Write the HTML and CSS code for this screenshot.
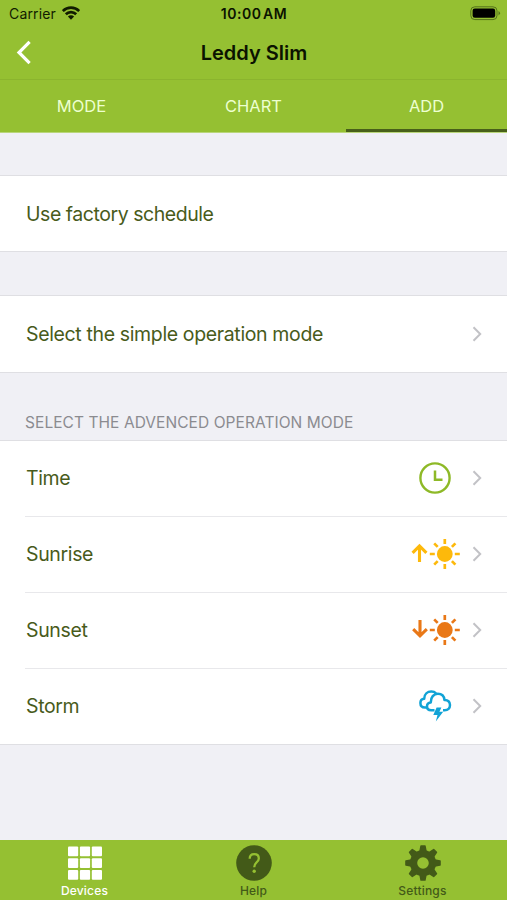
FILE: index.html
```html
<!DOCTYPE html>
<html lang="en">
<head>
<meta charset="utf-8">
<title>Leddy Slim</title>
<link rel="stylesheet" href="styles.css">
</head>
<body>
<svg class="defs" width="0" height="0" aria-hidden="true">
  <symbol id="chevron" viewBox="0 0 10 16"><path d="M1.500 1.300 8.200 8l-6.700 6.700" fill="none" stroke="currentColor" stroke-width="2"/></symbol>
  <symbol id="sun" viewBox="0 0 32 32">
    <circle cx="16" cy="16" r="7.900" fill="currentColor"/>
    <path d="M16 1v5M16 26v5M1 16h5M26 16h5M5.400 5.400 8.900 8.900M23.100 23.100l3.500 3.500M5.400 26.600l3.500-3.500M23.100 8.900l3.500-3.500" stroke="currentColor" stroke-width="2.700"/>
  </symbol>
</svg>
<div class="app">
  <header class="status">
    <div class="carrier"><span>Carrier</span>
      <svg width="18" height="14" viewBox="0 0 18 14"><g fill="none" stroke="#111c00" stroke-width="2.700"><path d="M.8 5a11.600 11.600 0 0 1 16.400 0"/><path d="M3.800 8.200a7.400 7.400 0 0 1 10.400 0"/></g><path d="M5.900 10.600a4.400 4.400 0 0 1 6.200 0L9 13.800z" fill="#111c00"/></svg>
    </div>
    <div class="clock">10:00&#8202;AM</div>
    <svg class="battery" width="31" height="15" viewBox="0 0 31 15"><rect x=".8" y=".8" width="26.200" height="12.800" rx="4" fill="none" stroke="#54721a" stroke-width="1"/><rect x="2.600" y="2.600" width="22.600" height="9.200" rx="2.200" fill="#000"/><path d="M28.500 5v4.400q3-2.200 0-4.400" fill="#54721a"/></svg>
  </header>
  <div class="nav">
    <svg class="back" width="16" height="26" viewBox="0 0 16 26"><path d="M13.600 1.900 3 12.500l10.600 10.600" fill="none" stroke="#fff" stroke-width="3.200"/></svg>
    <h1>Leddy Slim</h1>
  </div>
  <nav class="tabs"><span class="tab">MODE</span><span class="tab chart">CHART</span><span class="tab active">ADD</span></nav>
  <main>
    <section class="group"><div class="row"><span class="factory">Use factory schedule</span></div></section>
    <section class="group select"><div class="row"><span class="simple">Select the simple operation mode</span><svg class="chev"><use href="#chevron"/></svg></div></section>
    <h2><span>SELECT THE ADVENCED OPERATION MODE</span></h2>
    <section class="group modes">
      <div class="row"><span>Time</span>
        <svg class="icon" width="50" height="34" viewBox="0 0 50 34"><g fill="none" stroke="#8eb927"><circle cx="25" cy="17" r="14.600" stroke-width="2.400"/><path d="M25 9.500v9.200h7.500" stroke-width="2.500"/></g></svg>
        <svg class="chev"><use href="#chevron"/></svg></div>
      <div class="row"><span>Sunrise</span>
        <svg class="icon sunrise" width="50" height="34" viewBox="0 0 50 34"><path d="M9.500 25V9.500M2.600 15.800l6.900-6.900 6.900 6.900" fill="none" stroke="currentColor" stroke-width="3.100"/><use href="#sun" x="18.800" y="1" width="32" height="32"/></svg>
        <svg class="chev"><use href="#chevron"/></svg></div>
      <div class="row"><span>Sunset</span>
        <svg class="icon sunset" width="50" height="34" viewBox="0 0 50 34"><path d="M10 7v16M3.200 16.200l6.800 6.600 6.800-6.600" fill="none" stroke="currentColor" stroke-width="3.100"/><use href="#sun" x="18.800" y="1" width="32" height="32"/></svg>
        <svg class="chev"><use href="#chevron"/></svg></div>
      <div class="row"><span>Storm</span>
        <svg class="icon" width="50" height="34" viewBox="0 0 50 34"><g fill="none" stroke="#11a3d6" stroke-width="2.500" stroke-linejoin="round"><path d="M16.800 18.600H15c-3 0-4.600-2-4.600-4.500 0-2.700 1.800-4.200 3.800-4.300C14.300 5 17.500 2.600 21.300 2.600c2.200 0 3.600.6 4.800 1.800"/><path d="M24.500 21.300h-3.300c-2.800 0-4.200-1.800-4.200-4 0-2.400 1.700-3.800 3.800-3.900-.2-5.200 3-8.600 7-8.600 3.900 0 6.300 2.500 6.700 6.200 3.400-.2 5.500 1.900 5.500 5 0 3.200-2.100 5.300-5.300 5.300H33"/></g><path d="M26.600 18.400h4.800l-2 4.400h3.800l-7.400 9.600 1.700-6.400h-4.200z" fill="#11a3d6"/></svg>
        <svg class="chev"><use href="#chevron"/></svg></div>
    </section>
  </main>
  <footer class="bottom">
    <div class="item on"><svg width="36" height="36" viewBox="0 0 36 36" fill="currentColor"><rect x="1" y="1.500" width="10.200" height="9.800" rx="1"/><rect x="12.900" y="1.500" width="10.200" height="9.800" rx="1"/><rect x="24.800" y="1.500" width="10.200" height="9.800" rx="1"/><rect x="1" y="13.200" width="10.200" height="9.800" rx="1"/><rect x="12.900" y="13.200" width="10.200" height="9.800" rx="1"/><rect x="24.800" y="13.200" width="10.200" height="9.800" rx="1"/><rect x="1" y="24.900" width="10.200" height="9.800" rx="1"/><rect x="12.900" y="24.900" width="10.200" height="9.800" rx="1"/><rect x="24.800" y="24.900" width="10.200" height="9.800" rx="1"/></svg><span>Devices</span></div>
    <div class="item"><svg width="36" height="36" viewBox="0 0 36 36"><circle cx="18" cy="18" r="17.800" fill="currentColor"/><path d="M13.700 13.800C13.700 11 15.400 9.200 18.200 9.200s4.600 1.700 4.600 4.200c0 3.800-4.600 4.100-4.600 8.800" fill="none" stroke="#95c032" stroke-width="2.300"/><circle cx="18.200" cy="26.200" r="1.700" fill="#95c032"/></svg><span>Help</span></div>
    <div class="item"><svg width="36" height="36" viewBox="0 0 36 36"><g fill="currentColor"><path fill-rule="evenodd" d="M18 4.900a13.100 13.100 0 1 0 0 26.200 13.100 13.100 0 0 0 0-26.200m0 7.300a5.800 5.800 0 1 1 0 11.600 5.800 5.800 0 0 1 0-11.600"/><path id="tooth" d="M14 7.500 15.300.8Q15.400.2 16 .2h4q.6 0 .7.600L22 7.500z"/><use href="#tooth" transform="rotate(45 18 18)"/><use href="#tooth" transform="rotate(90 18 18)"/><use href="#tooth" transform="rotate(135 18 18)"/><use href="#tooth" transform="rotate(180 18 18)"/><use href="#tooth" transform="rotate(225 18 18)"/><use href="#tooth" transform="rotate(270 18 18)"/><use href="#tooth" transform="rotate(315 18 18)"/></g></svg><span>Settings</span></div>
  </footer>
</div>
</body>
</html>
```
FILE: styles.css
```css
* { box-sizing: border-box; }
body { margin: 0; font-family: Inter, "Liberation Sans", sans-serif; color: #485b1b; }
h1, h2 { margin: 0; font-weight: 400; }
svg { display: block; flex: none; }
.defs { position: absolute; }
.app { width: 507px; height: 900px; display: flex; flex-direction: column; background: #f0f0f5; }
.status { height: 27px; background: #95c032; display: grid; grid-template-columns: 1fr auto 1fr; align-items: center; padding: 0 6px 0 9px; color: #111c00; font-size: 14px; }
.carrier { display: flex; align-items: center; gap: 6px; letter-spacing: .15px; }
.carrier svg { margin-top: -2px; }
.clock { font-weight: 600; letter-spacing: .5px; color: #0b1300; margin-left: -2px; }
.battery { justify-self: end; }
.nav { height: 53px; background: #95c032; border-bottom: 1px solid #8bb42e; display: grid; grid-template-columns: 1fr auto 1fr; align-items: center; padding: 0 16px; }
.nav h1 { font-size: 20px; line-height: 24px; font-weight: 600; color: #0b1300; margin-top: -1px; padding-left: 1px; }
.tabs { height: 53px; background: #95c032; display: grid; grid-template-columns: 161px 1fr 161px; border-bottom: 1px solid #b9d67a; }
.tab { display: flex; align-items: center; justify-content: center; font-size: 16.500px; color: #edffd0; border-bottom: 3px solid transparent; padding-top: 3px; }
.tab:first-child { padding-left: 2px; }
.tab.active { border-bottom-color: #48601a; }
main { flex: 1; padding-top: 42px; }
.group { background: #fff; border-top: 1px solid #dfdfe3; border-bottom: 1px solid #dfdfe3; }
.group + .group { margin-top: 43px; }
.row { height: 75px; margin-left: 25px; padding-right: 25px; display: flex; align-items: center; font-size: 19.500px; line-height: 24px; letter-spacing: -.36px; }
.select .row { height: 76px; }
.row > span { margin-right: auto; padding-left: 1px; }
.factory { letter-spacing: -.45px; }
.chev { width: 10px; height: 16px; color: #c2c2c6; }
.icon { margin-right: 12px; }
.modes .row { padding-bottom: 1px; }
.modes .row + .row { height: 76px; border-top: 1px solid #e8e8eb; }
.sunrise { color: #fdb90b; }
.sunset { color: #e97817; }
h2 { height: 67px; padding: 39px 25px 0; font-size: 15.500px; line-height: 22px; letter-spacing: .06px; color: #8b8b90; white-space: nowrap; }
.bottom { height: 60px; background: #95c032; display: grid; grid-template-columns: repeat(3, 1fr); color: #435a18; }
.item { display: flex; flex-direction: column; align-items: center; padding-top: 5px; font-size: 12px; line-height: 14px; font-weight: 500; letter-spacing: .2px; }
.item span { margin-top: 3px; }
.item.on { color: #fff; }
```
